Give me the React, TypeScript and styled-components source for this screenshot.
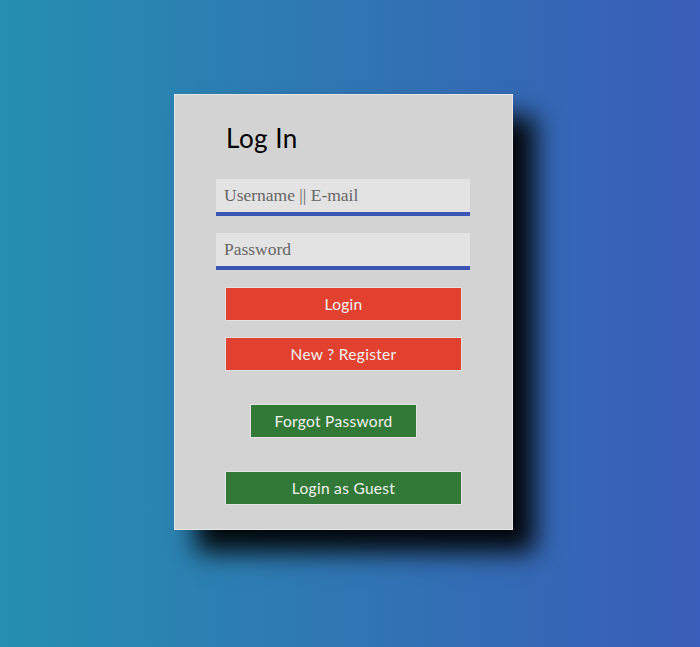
import React from "react";
import styled, { createGlobalStyle } from "styled-components";

const Global = createGlobalStyle`
  html, body { margin: 0; padding: 0; }
  body {
    width: 700px;
    height: 647px;
    overflow: hidden;
    background: linear-gradient(90deg, #258fb0 0%, #2f78b3 45%, #395db8 100%);
    font-family: Lato, "Noto Sans", sans-serif;
  }
`;

const Page = styled.div`
  padding: 94px 0 0 174px;
`;

const Card = styled.form`
  box-sizing: border-box;
  width: 339px;
  height: 436px;
  background: #d3d3d3;
  border: 1px solid #e6e6e6;
  box-shadow: 22px 22px 24px rgba(0, 0, 0, 0.95);
  display: flex;
  flex-direction: column;
  padding: 27px 0 0 41px;
`;

const Title = styled.h1`
  margin: 0 0 0 10px;
  font-family: Lato, sans-serif;
  font-weight: 400;
  font-size: 26px;
  line-height: 32px;
  color: #000;
  letter-spacing: 0.5px;
`;

const Input = styled.input<{ $top: number }>`
  box-sizing: border-box;
  width: 254px;
  height: 37px;
  margin-top: ${(p) => p.$top}px;
  border: none;
  border-bottom: 4px solid #3a55b6;
  background: #e3e3e3;
  padding: 0 8px;
  font-family: "Liberation Serif", serif;
  font-size: 17.5px;
  color: #333;
  outline: none;
  &::placeholder { color: #666; }
`;

const Button = styled.button<{ $color: string; $w: number; $left: number; $top: number }>`
  box-sizing: border-box;
  width: ${(p) => p.$w}px;
  height: 34px;
  margin-top: ${(p) => p.$top}px;
  margin-left: ${(p) => p.$left}px;
  background: ${(p) => p.$color};
  border: 1px solid #e2e2e2;
  color: #f2f2f2;
  font-family: Lato, sans-serif;
  font-size: 15.5px;
  letter-spacing: 0.3px;
  padding: 0;
  cursor: pointer;
`;

export default function App() {
  return (
    <>
      <Global />
      <Page>
        <Card onSubmit={(e) => e.preventDefault()}>
          <Title>Log In</Title>
          <Input $top={25} placeholder="Username || E-mail" />
          <Input $top={17} type="password" placeholder="Password" />
          <Button $color="#e2412f" $w={237} $left={9} $top={17}>Login</Button>
          <Button $color="#e2412f" $w={237} $left={9} $top={16}>New ? Register</Button>
          <Button $color="#327937" $w={167} $left={34} $top={33}>Forgot Password</Button>
          <Button $color="#327937" $w={237} $left={9} $top={33}>Login as Guest</Button>
        </Card>
      </Page>
    </>
  );
}
